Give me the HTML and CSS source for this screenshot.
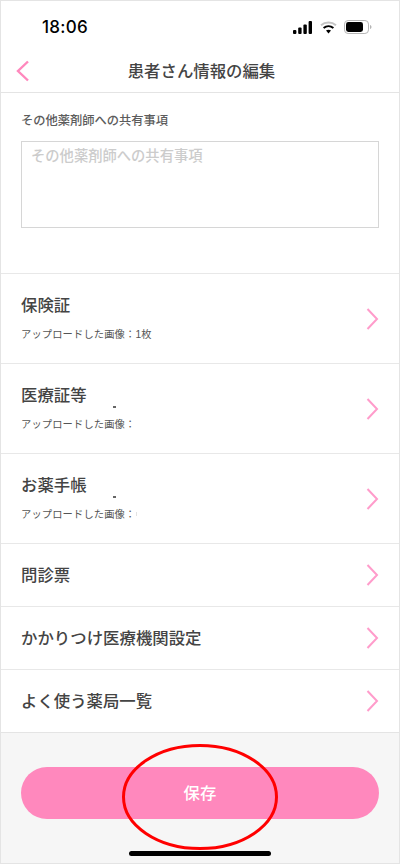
FILE: index.html
```html
<!DOCTYPE html>
<html lang="ja">
<head>
<meta charset="utf-8">
<title>患者さん情報の編集</title>
<link rel="stylesheet" href="styles.css">
</head>
<body>
<div class="phone">
  <div class="status">
    <span class="time">18:06</span>
    <div class="status-icons">
      <svg class="signal" width="20" height="13" viewBox="0 0 20 13"><rect x="0" y="9" width="3.4" height="4" rx="1" fill="#000"/><rect x="5.2" y="6.5" width="3.4" height="6.5" rx="1" fill="#000"/><rect x="10.4" y="3.5" width="3.4" height="9.5" rx="1" fill="#000"/><rect x="15.6" y="0" width="3.4" height="13" rx="1" fill="#000"/></svg>
      <svg class="wifi" width="17" height="13" viewBox="0 0 17 13"><path d="M1 4.2C5.2 .6 11.8 .6 16 4.2" fill="none" stroke="#c4c4c4" stroke-width="2"/><path d="M3.6 7C6.4 4.8 10.6 4.8 13.4 7" fill="none" stroke="#000" stroke-width="2"/><path d="M6 9.6C7.4 8.6 9.6 8.6 11 9.6L8.5 12.4Z" fill="#000"/></svg>
      <svg class="battery" width="28" height="14" viewBox="0 0 28 14"><rect x=".5" y=".5" width="24" height="13" rx="3.6" fill="none" stroke="#b5b5b5"/><rect x="2" y="2" width="17" height="10" rx="2.4" fill="#000"/><path d="M26 5v4c.9-.3 1.5-1.1 1.5-2s-.6-1.700-1.500-2Z" fill="#b5b5b5"/></svg>
    </div>
  </div>
  <header class="nav">
    <svg class="back" width="14" height="22" viewBox="0 0 14 22"><path d="M12 1.500 2 11l10 9.500" fill="none" stroke="#ff88bd" stroke-width="2.400"/></svg>
    <h1>患者さん情報の編集</h1>
  </header>
  <section class="note">
    <label class="note-label" for="note">その他薬剤師への共有事項</label>
    <textarea id="note" class="note-box" placeholder="その他薬剤師への共有事項"></textarea>
  </section>
  <ul class="list">
    <li class="row row-tall">
      <div class="row-text"><span class="row-title">保険証</span><span class="row-sub">アップロードした画像：1枚</span></div>
      <svg class="chev" width="13" height="22" viewBox="0 0 13 22"><path d="M1.500 1 11 11 1.500 21" fill="none" stroke="#ff9ccb" stroke-width="2"/></svg>
    </li>
    <li class="row row-tall">
      <div class="row-text"><span class="row-title">医療証等</span><span class="row-sub">アップロードした画像：</span></div>
      <span class="dot"></span>
      <svg class="chev" width="13" height="22" viewBox="0 0 13 22"><path d="M1.500 1 11 11 1.500 21" fill="none" stroke="#ff9ccb" stroke-width="2"/></svg>
    </li>
    <li class="row row-tall">
      <div class="row-text"><span class="row-title">お薬手帳</span><span class="row-sub">アップロードした画像：</span></div>
      <span class="dot"></span>
      <span class="speck"></span>
      <svg class="chev" width="13" height="22" viewBox="0 0 13 22"><path d="M1.500 1 11 11 1.500 21" fill="none" stroke="#ff9ccb" stroke-width="2"/></svg>
    </li>
    <li class="row">
      <span class="row-title">問診票</span>
      <svg class="chev" width="13" height="22" viewBox="0 0 13 22"><path d="M1.500 1 11 11 1.500 21" fill="none" stroke="#ff9ccb" stroke-width="2"/></svg>
    </li>
    <li class="row">
      <span class="row-title">かかりつけ医療機関設定</span>
      <svg class="chev" width="13" height="22" viewBox="0 0 13 22"><path d="M1.500 1 11 11 1.500 21" fill="none" stroke="#ff9ccb" stroke-width="2"/></svg>
    </li>
    <li class="row">
      <span class="row-title">よく使う薬局一覧</span>
      <svg class="chev" width="13" height="22" viewBox="0 0 13 22"><path d="M1.500 1 11 11 1.500 21" fill="none" stroke="#ff9ccb" stroke-width="2"/></svg>
    </li>
  </ul>
  <footer class="foot">
    <button class="save">保存</button>
    <svg class="ring" width="160" height="108" viewBox="0 0 160 108"><ellipse cx="80" cy="54" rx="76.500" ry="51.500" fill="none" stroke="#f00" stroke-width="3"/></svg>
    <span class="home"></span>
  </footer>
</div>
</body>
</html>
```
FILE: styles.css
```css
* { box-sizing: border-box; }
html, body { margin: 0; padding: 0; }
body { background: #fff; font-family: "Liberation Sans", "Noto Sans CJK JP", sans-serif; color: #444; }
.phone { width: 400px; height: 864px; display: flex; flex-direction: column; border: 1px solid #e4e4e4; overflow: hidden; background: #fff; }
.status { height: 47px; flex: none; display: flex; align-items: center; justify-content: space-between; padding: 5px 27px 0 41px; }
.time { font-family: Inter, "Liberation Sans", sans-serif; font-size: 17px; font-weight: 500; color: #000; letter-spacing: .3px; }
.status-icons { display: flex; align-items: center; gap: 7px; }
.nav { height: 45px; flex: none; position: relative; display: flex; align-items: center; justify-content: center; padding-left: 3px; border-bottom: 1px solid #e4e4e4; }
.back { position: absolute; left: 15px; top: 12px; }
.nav h1 { margin: 0; font-size: 16.4px; font-weight: 500; color: #444; }
.note { height: 180px; flex: none; padding: 20px 20px 0; }
.note-label { display: block; font-size: 12.25px; line-height: 16px; font-weight: 500; color: #5c5c5c; margin-bottom: 12px; }
.note-box { display: block; width: 358px; height: 87px; padding: 4px 9px; border: 1px solid #d6d6d6; resize: none; font: 500 14.3px/20px "Liberation Sans", "Noto Sans CJK JP", sans-serif; outline: none; }
.note-box::placeholder { color: #ccc; opacity: 1; }
.list { list-style: none; margin: 0; padding: 0; flex: none; }
.row { height: 63px; position: relative; display: flex; align-items: center; justify-content: space-between; padding: 0 20px; border-top: 1px solid #e8e8e8; }
.row-tall { height: 90px; }
.row-text { display: flex; flex-direction: column; padding-bottom: 3px; }
.row-title { font-size: 16.4px; line-height: 24px; font-weight: 500; color: #444; }
.row-sub { font-size: 10.25px; line-height: 14px; letter-spacing: .15px; color: #555; margin-top: 11px; }
.dot { position: absolute; left: 112px; top: 42px; width: 3px; height: 2px; background: #666; }
.speck { position: absolute; left: 135px; top: 58px; width: 1px; height: 4px; background: #e2e2e2; }
.foot { flex: 1; position: relative; background: #f6f6f6; border-top: 1px solid #e4e4e4; padding: 34px 20px 0; }
.save { display: block; width: 358px; height: 52px; padding: 0 0 2px; border: 0; border-radius: 26px; background: #ff88bd; color: #fff; font: 500 16.4px "Liberation Sans", "Noto Sans CJK JP", sans-serif; }
.ring { position: absolute; left: 119px; top: 10px; }
.home { position: absolute; left: 128px; top: 118px; width: 142px; height: 5px; border-radius: 3px; background: #000; }
```
